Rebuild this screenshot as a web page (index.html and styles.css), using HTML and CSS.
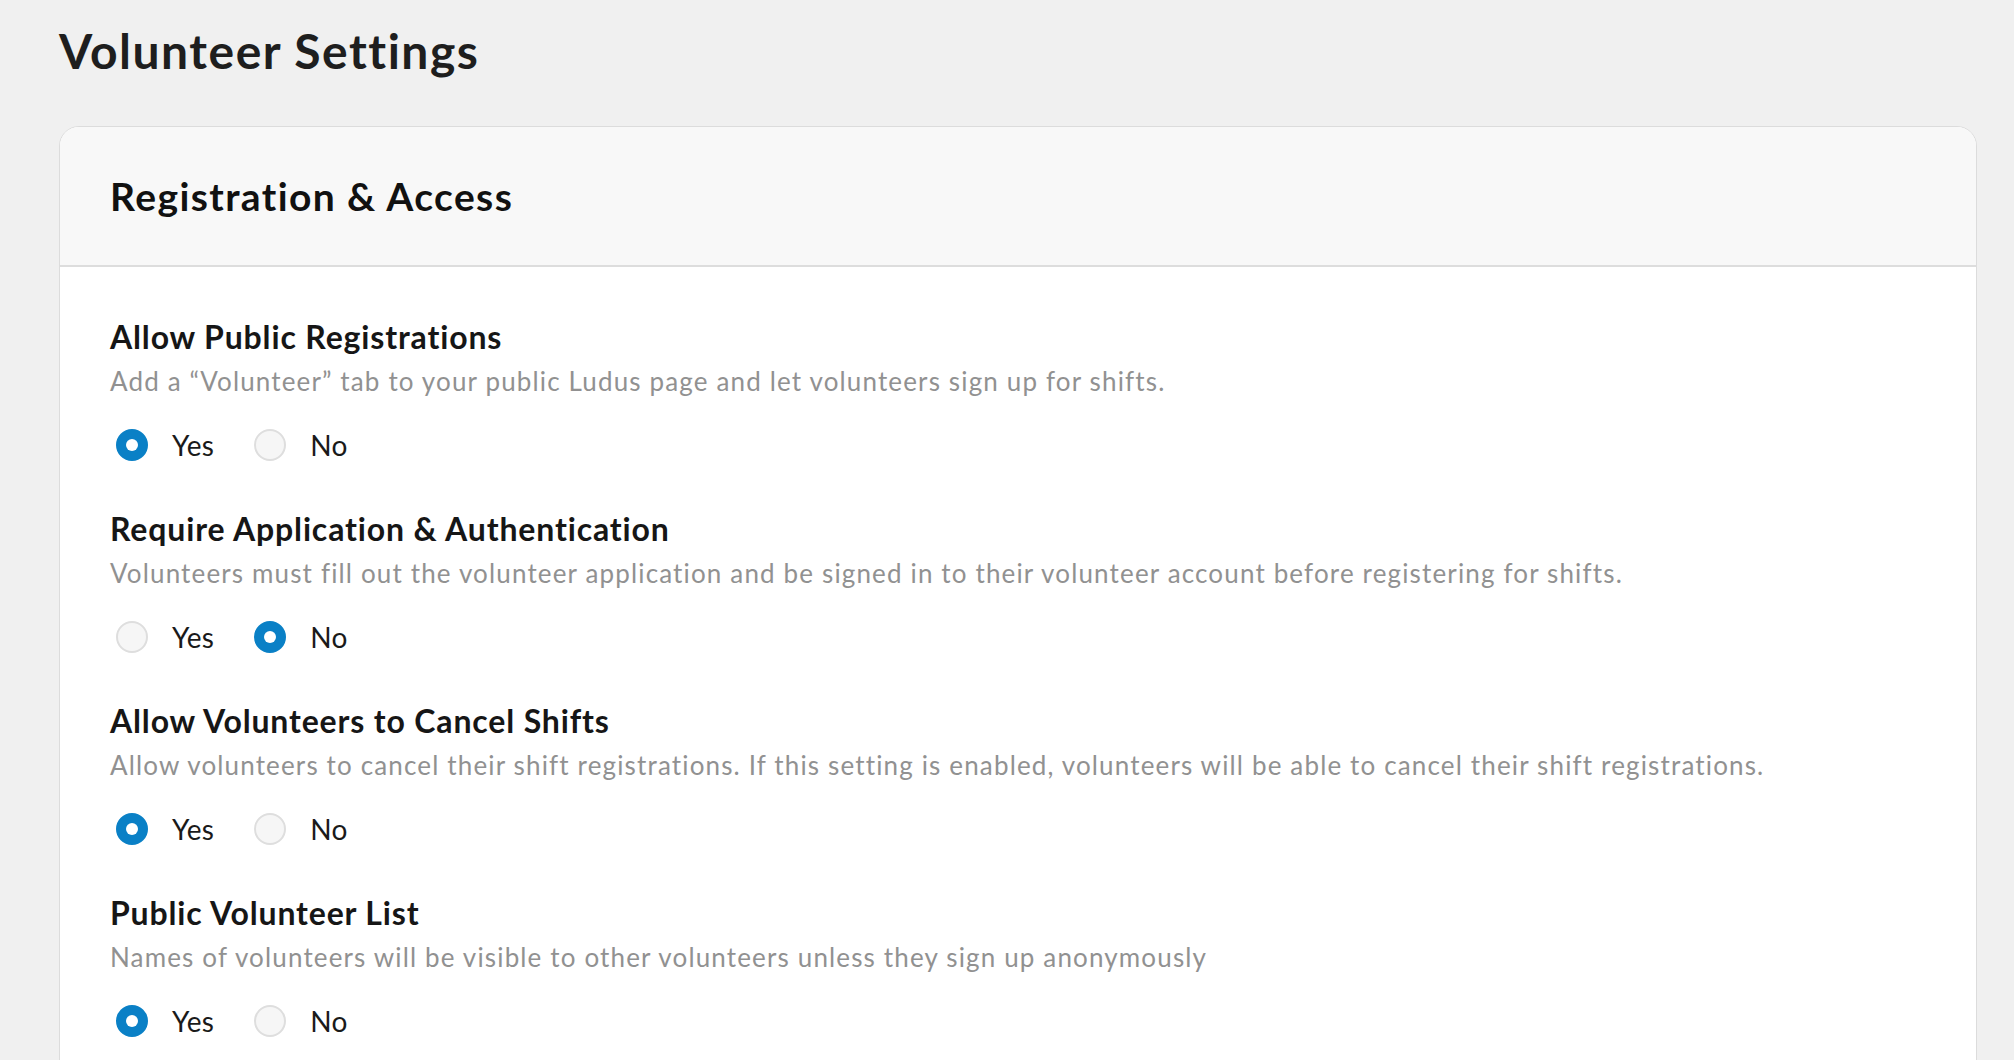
FILE: index.html
```html
<!DOCTYPE html>
<html lang="en">
<head>
<meta charset="utf-8">
<title>Volunteer Settings</title>
<link rel="stylesheet" href="styles.css">
</head>
<body>
<main class="page">
  <h1 class="page-title">Volunteer Settings</h1>
  <section class="card">
    <header class="card-header">
      <h2 class="card-title">Registration &amp; Access</h2>
    </header>
    <div class="card-body">
      <div class="setting">
        <h3 class="setting-title">Allow Public Registrations</h3>
        <p class="setting-desc">Add a “Volunteer” tab to your public Ludus page and let volunteers sign up for shifts.</p>
        <div class="options">
          <label class="option"><span class="radio checked"></span><span class="option-label">Yes</span></label>
          <label class="option"><span class="radio"></span><span class="option-label">No</span></label>
        </div>
      </div>
      <div class="setting">
        <h3 class="setting-title">Require Application &amp; Authentication</h3>
        <p class="setting-desc">Volunteers must fill out the volunteer application and be signed in to their volunteer account before registering for shifts.</p>
        <div class="options">
          <label class="option"><span class="radio"></span><span class="option-label">Yes</span></label>
          <label class="option"><span class="radio checked"></span><span class="option-label">No</span></label>
        </div>
      </div>
      <div class="setting">
        <h3 class="setting-title">Allow Volunteers to Cancel Shifts</h3>
        <p class="setting-desc">Allow volunteers to cancel their shift registrations. If this setting is enabled, volunteers will be able to cancel their shift registrations.</p>
        <div class="options">
          <label class="option"><span class="radio checked"></span><span class="option-label">Yes</span></label>
          <label class="option"><span class="radio"></span><span class="option-label">No</span></label>
        </div>
      </div>
      <div class="setting">
        <h3 class="setting-title">Public Volunteer List</h3>
        <p class="setting-desc">Names of volunteers will be visible to other volunteers unless they sign up anonymously</p>
        <div class="options">
          <label class="option"><span class="radio checked"></span><span class="option-label">Yes</span></label>
          <label class="option"><span class="radio"></span><span class="option-label">No</span></label>
        </div>
      </div>
    </div>
  </section>
</main>
</body>
</html>
```

FILE: styles.css
```css
html, body {
  margin: 0;
  padding: 0;
  background: #f0f0f0;
  overflow: hidden;
}

body {
  font-family: "Lato", "Noto Sans", sans-serif;
  color: #1c1c1c;
}

.page {
  padding: 0 37px 0 59px;
}

.page-title {
  margin: 0;
  padding-top: 23px;
  font-size: 48px;
  line-height: 56px;
  font-weight: 700;
  letter-spacing: 1.5px;
  color: #1e1e1e;
}

.card {
  margin-top: 47px;
  background: #ffffff;
  border: 1px solid #dcdcdc;
  border-radius: 20px;
  overflow: hidden;
}

.card-header {
  height: 138px;
  display: flex;
  align-items: center;
  padding: 0 50px;
  background: #f8f8f8;
  border-bottom: 2px solid #dddddd;
}

.card-title {
  margin: 0;
  font-size: 39px;
  font-weight: 700;
  letter-spacing: 1.4px;
  color: #111111;
}

.card-body {
  padding: 51px 50px 60px;
}

.setting + .setting {
  margin-top: 49px;
}

.setting-title {
  margin: 0;
  font-size: 32px;
  line-height: 38px;
  font-weight: 700;
  letter-spacing: 0.85px;
  color: #161616;
}

.setting-desc {
  margin: 10px 0 0;
  font-size: 26px;
  line-height: 30px;
  letter-spacing: 1.15px;
  color: #919191;
}

.options {
  margin-top: 33px;
  display: flex;
  align-items: center;
  gap: 40px;
  padding-left: 6px;
}

.option {
  display: flex;
  align-items: center;
  gap: 24px;
}

.radio {
  box-sizing: border-box;
  width: 32px;
  height: 32px;
  border-radius: 50%;
  background: #f6f6f6;
  border: 2px solid #dedede;
  display: flex;
  align-items: center;
  justify-content: center;
}

.radio.checked {
  background: #0a80c6;
  border-color: #0a80c6;
}

.radio.checked::after {
  content: "";
  width: 12px;
  height: 12px;
  border-radius: 50%;
  background: #ffffff;
}

.option-label {
  font-size: 28px;
  line-height: 32px;
  letter-spacing: 0.3px;
  color: #1a1a1a;
}
```
